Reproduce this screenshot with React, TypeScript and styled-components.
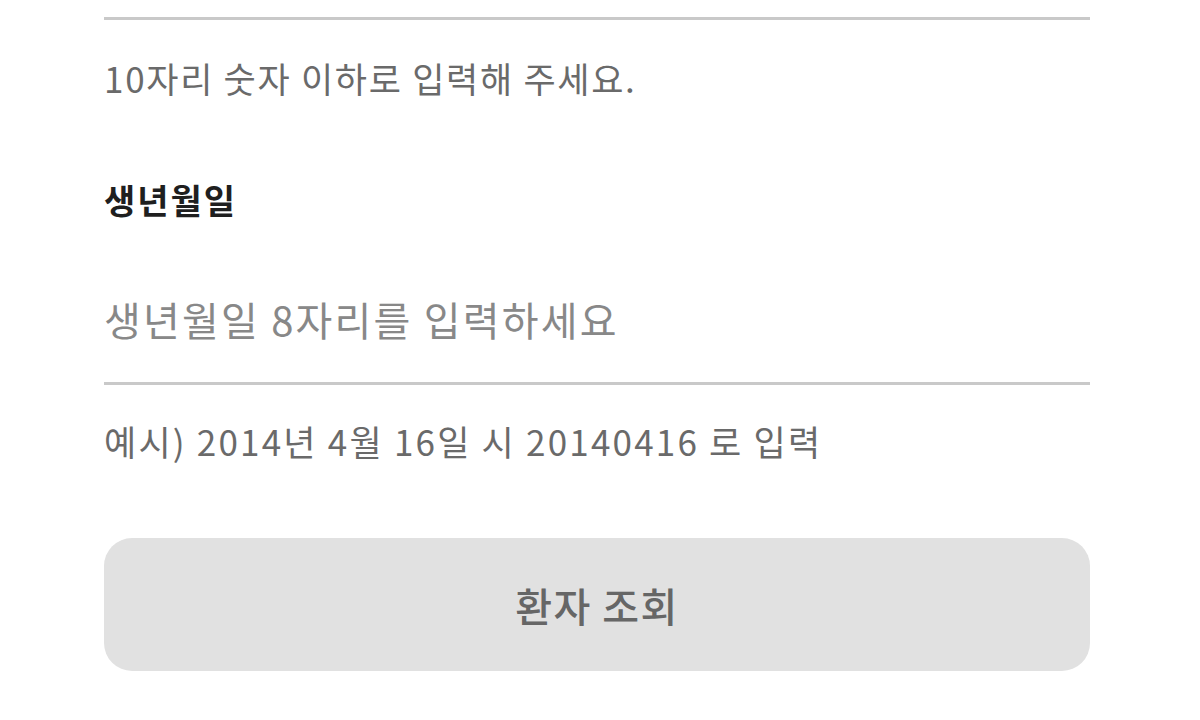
import React from "react";
import styled, { createGlobalStyle } from "styled-components";

const GlobalStyle = createGlobalStyle`
  html, body {
    margin: 0;
    padding: 0;
    background: #ffffff;
  }
  body {
    font-family: "Noto Sans CJK KR", "Noto Sans", sans-serif;
    -webkit-font-smoothing: antialiased;
  }
`;

const Page = styled.div`
  width: 1200px;
  height: 720px;
  overflow: hidden;
  box-sizing: border-box;
  padding: 17px 110px 0 104px;
  display: flex;
  flex-direction: column;
`;

// bottom edge of the patient number input that sits above the fold
const Rule = styled.div`
  height: 3px;
  background: #c9c9c9;
`;

const Hint = styled.p<{ $top: number; $spacing?: number }>`
  margin: ${({ $top }) => $top}px 0 0;
  font-size: 35px;
  line-height: 40px;
  color: #6a6a6a;
  letter-spacing: ${({ $spacing = 2.1 }) => $spacing}px;
`;

const Label = styled.label`
  margin-top: 82px;
  font-size: 34px;
  line-height: 40px;
  font-weight: 700;
  color: #1f1f1f;
  letter-spacing: 2px;
`;

const InputRow = styled.div`
  margin-top: 76px;
  padding-bottom: 40px;
  border-bottom: 3px solid #c9c9c9;
`;

const Input = styled.input`
  width: 100%;
  border: none;
  outline: none;
  padding: 0;
  background: transparent;
  font-family: inherit;
  font-size: 40px;
  line-height: 46px;
  height: 46px;
  letter-spacing: 2.2px;
  color: #1f1f1f;

  &::placeholder {
    color: #888888;
  }
`;

const SubmitButton = styled.button`
  margin-top: 77px;
  height: 133px;
  border: none;
  border-radius: 28px;
  background: #e1e1e1;
  color: #666666;
  font-family: inherit;
  font-size: 40px;
  font-weight: 500;
  letter-spacing: 1.5px;
  cursor: not-allowed;
`;

export default function App() {
  return (
    <>
      <GlobalStyle />
      <Page>
        <Rule />
        <Hint $top={38} $spacing={1.7}>10자리 숫자 이하로 입력해 주세요.</Hint>
        <Label htmlFor="birth">생년월일</Label>
        <InputRow>
          <Input id="birth" placeholder="생년월일 8자리를 입력하세요" />
        </InputRow>
        <Hint $top={36} $spacing={2.2}>예시) 2014년 4월 16일 시 20140416 로 입력</Hint>
        <SubmitButton disabled>환자 조회</SubmitButton>
      </Page>
    </>
  );
}
